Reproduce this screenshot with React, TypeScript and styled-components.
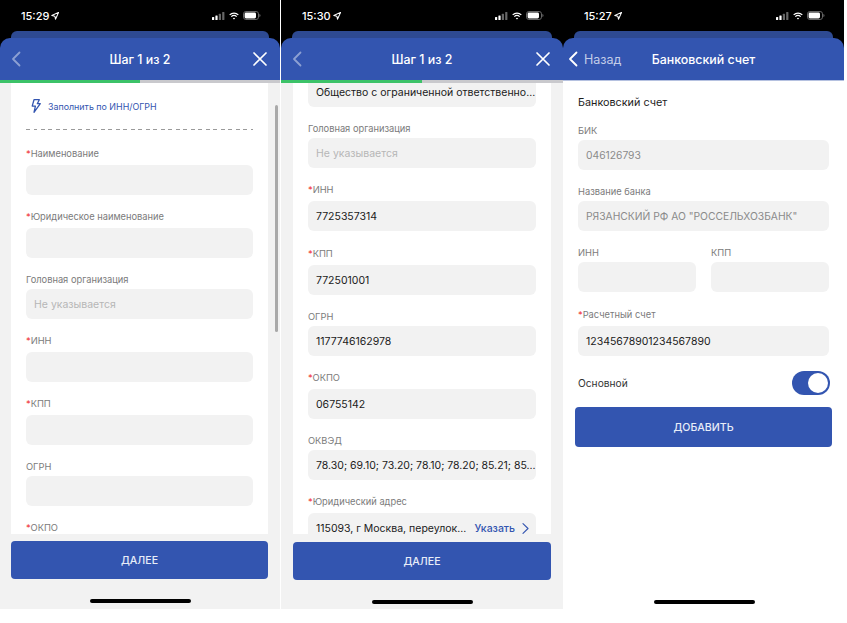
import React from 'react';
import styled, { createGlobalStyle } from 'styled-components';

const GlobalStyle = createGlobalStyle`
  html, body { margin: 0; padding: 0; background: #fff; }
  body { font-family: Inter, "Noto Sans", "Liberation Sans", sans-serif; }
`;

const Page = styled.div`
  display: flex;
  width: 847px;
  height: 623px;
  overflow: hidden;
  background: #fff;
`;
const Phone = styled.div<{ $width: number; $gapRight?: boolean; $light?: boolean }>`
  width: ${props => props.$width}px;
  margin-right: ${props => (props.$gapRight ? 1 : 0)}px;
  height: 609px;
  flex: none;
  display: flex;
  flex-direction: column;
  position: relative;
  background: ${props => (props.$light ? '#fff' : '#f2f2f2')};
`;
const StatusBar = styled.div`
  height: 31px;
  background: #000;
  color: #fff;
  display: flex;
  align-items: center;
  justify-content: space-between;
  padding: 0 19px 0 21px;
  box-sizing: border-box;
  font-size: 11px;
  font-weight: 500;
`;
const Time = styled.div`
  display: flex;
  align-items: center;
  gap: 2px;
`;
const StatusIcons = styled.div`
  display: flex;
  align-items: center;
  gap: 4px;
`;
const SheetEdge = styled.div`
  height: 7px;
  background: #000;
  padding: 0 11px;
  &::before {
    content: '';
    display: block;
    height: 7px;
    background: #2e4a92;
    border-radius: 6px 6px 0 0;
  }
`;
const HeaderWrap = styled.div`
  background: #000;
`;
const Header = styled.header`
  height: 42px;
  background: #3355b0;
  border-radius: 10px 10px 0 0;
  color: #fff;
  display: flex;
  align-items: center;
  justify-content: center;
  position: relative;
  font-size: 12.4px;
  font-weight: 500;
`;
const BackLink = styled.div`
  position: absolute;
  left: 5px;
  top: 13px;
  display: flex;
  align-items: center;
  gap: 6px;
  font-size: 12.5px;
  font-weight: 400;
  color: #c3cde8;
`;
const HeaderIcon = styled.div<{ $side: 'left' | 'right' }>`
  position: absolute;
  top: 13px;
  ${props => (props.$side === 'left' ? 'left: 11px;' : 'right: 12px;')}
  display: flex;
`;
const Progress = styled.div`
  height: 3px;
  background: #c9c9cd;
`;
const ProgressFill = styled.div`
  width: 50%;
  height: 100%;
  background: #3cc268;
`;
const Body = styled.div<{ $left: number }>`
  flex: 1;
  display: flex;
  flex-direction: column;
  min-height: 0;
  padding: 0 12px 0 ${props => props.$left}px;
`;
const Card = styled.div`
  height: 451px;
  background: #fff;
  overflow: hidden;
  padding: 0 15px;
  box-sizing: border-box;
  display: flex;
  flex-direction: column;
`;
const FillRow = styled.div`
  height: 46px;
  flex: none;
  display: flex;
  align-items: center;
  gap: 7px;
  padding: 0 5px;
  color: #3355b0;
  font-size: 8.9px;
`;
const Divider = styled.div`
  height: 1px;
  flex: none;
  margin-bottom: 17px;
  background: repeating-linear-gradient(90deg, #9a9a9a 0 4px, transparent 4px 7.5px);
`;
const Field = styled.div<{ $grow?: boolean; $extra?: number }>`
  flex: ${props => (props.$grow ? 1 : 'none')};
  min-width: 0;
  margin-bottom: ${props => 15 + (props.$extra ?? 0)}px;
`;
const Label = styled.div<{ $required?: boolean }>`
  font-size: 9.3px;
  line-height: 14px;
  color: #7b7b7b;
  margin-bottom: ${props => (props.$required ? 4 : 2)}px;
`;
const Star = styled.span`
  color: #f03a3a;
`;
const Input = styled.div<{ $clipped?: boolean; $muted?: boolean; $placeholder?: boolean }>`
  height: ${props => (props.$clipped ? 24 : 30)}px;
  padding: 0 8px ${props => (props.$clipped ? 6 : 0)}px;
  box-sizing: border-box;
  background: #f2f2f2;
  border-radius: ${props => (props.$clipped ? '0 0 6px 6px' : '6px')};
  display: flex;
  align-items: center;
  gap: 8px;
  font-size: ${props => (props.$muted ? 10.3 : 10.5)}px;
  color: ${props => (props.$placeholder ? '#b6b6b6' : props.$muted ? '#8a8a8a' : '#1a1a1a')};
`;
const InputText = styled.span`
  flex: 1;
  min-width: 0;
  white-space: nowrap;
`;
const Action = styled.span`
  color: #3355b0;
  font-weight: 500;
  display: flex;
  align-items: center;
  gap: 7px;
  margin-right: -1px;
`;
const Scrollbar = styled.div`
  position: absolute;
  left: 275px;
  top: 105px;
  width: 2.5px;
  height: 227px;
  border-radius: 2px;
  background: #a9a9a9;
`;
const PrimaryButton = styled.div<{ $top?: number }>`
  height: 38px;
  flex: none;
  margin-top: ${props => props.$top ?? 7}px;
  background: #3355b0;
  border-radius: 4px;
  color: #e8edf8;
  font-size: 10.6px;
  font-weight: 500;
  display: flex;
  align-items: center;
  justify-content: center;
`;
const HomeBar = styled.div<{ $bottom: number }>`
  position: absolute;
  bottom: ${props => props.$bottom}px;
  left: 50%;
  width: 101px;
  height: 4px;
  margin-left: -50px;
  border-radius: 2px;
  background: #000;
`;
const AccountBody = styled.div`
  flex: 1;
  padding: 0 15px;
  border-top: 1px solid #b5c1e0;
`;
const AccountTitle = styled.div`
  height: 43px;
  display: flex;
  align-items: center;
  font-size: 10.8px;
  color: #1d1d1d;
  box-sizing: border-box;
`;
const TwoColumns = styled.div`
  display: flex;
  gap: 15px;
  margin: 2px 0 1px;
`;
const SwitchRow = styled.div`
  height: 30px;
  margin-top: -3px;
  display: flex;
  align-items: center;
  justify-content: space-between;
  font-size: 10.2px;
  color: #333;
`;
const Switch = styled.div`
  width: 38px;
  height: 24px;
  margin-right: -1px;
  box-sizing: border-box;
  padding: 2px;
  border-radius: 12px;
  background: #3355b0;
  display: flex;
  justify-content: flex-end;
`;
const Knob = styled.div`
  width: 20px;
  height: 20px;
  border-radius: 50%;
  background: #fff;
`;
const AddButton = styled(PrimaryButton)`
  height: 40px;
  margin: 9px -3px 0;
`;

const Location = () => (
  <svg width="8" height="8" viewBox="0 0 10 10">
    <path d="M9.5.5 1 4.4l3.8.8.8 3.8z" fill="none" stroke="#fff" strokeWidth="1.3" strokeLinejoin="round" />
  </svg>
);

const Signal = () => (
  <svg width="13" height="8" viewBox="0 0 13 8">
    <rect x="0" y="5" width="2.2" height="3" rx=".5" fill="#fff" />
    <rect x="3.400" y="3.500" width="2.2" height="4.500" rx=".5" fill="#fff" />
    <rect x="6.800" y="1.700" width="2.2" height="6.300" rx=".5" fill="#666" />
    <rect x="10.200" y="0" width="2.2" height="8" rx=".5" fill="#666" />
  </svg>
);

const Wifi = () => (
  <svg width="10" height="8" viewBox="0 0 12 9" fill="none" stroke="#fff" strokeWidth="1.5">
    <path d="M.8 3.100a7.600 7.600 0 0 1 10.400 0" />
    <path d="M2.800 5.200a4.700 4.700 0 0 1 6.400 0" />
    <path d="M6 8.800 4.600 7.200a2 2 0 0 1 2.800 0z" fill="#fff" stroke="none" />
  </svg>
);

const Battery = () => (
  <svg width="18" height="9" viewBox="0 0 18 9">
    <rect x=".5" y=".5" width="15" height="8" rx="2.4" fill="none" stroke="#666" />
    <rect x="1.600" y="1.600" width="11.400" height="5.800" rx="1.400" fill="#fff" />
    <path d="M16.400 3v3c.7-.2 1.100-.8 1.100-1.500S17.100 3.200 16.400 3z" fill="#666" />
  </svg>
);

const Status = ({ time }: { time: string }) => (
  <StatusBar>
    <Time>
      {time}
      <Location />
    </Time>
    <StatusIcons>
      <Signal />
      <Wifi />
      <Battery />
    </StatusIcons>
  </StatusBar>
);

const Chevron = ({ color }: { color: string }) => (
  <svg width="10" height="16" viewBox="0 0 10 16" fill="none" stroke={color} strokeWidth="1.8" strokeLinecap="round" strokeLinejoin="round">
    <path d="M8.500 1.500 2 8l6.500 6.500" />
  </svg>
);

const Close = () => (
  <svg width="16" height="16" viewBox="0 0 16 16" fill="none" stroke="#fff" strokeWidth="1.7" strokeLinecap="round">
    <path d="M2 2l12 12M14 2 2 14" />
  </svg>
);

const Bolt = () => (
  <svg width="10" height="14" viewBox="0 0 10 14" fill="none" stroke="#3355b0" strokeWidth="1.3" strokeLinejoin="round">
    <path d="M3 .7h5.300L6.300 4.700h3L3 13.300l1.400-6.200H1.200z" />
  </svg>
);

const SmallChevron = () => (
  <svg width="7" height="11" viewBox="0 0 7 11" fill="none" stroke="#3355b0" strokeWidth="1.1" strokeLinecap="round" strokeLinejoin="round">
    <path d="M1 .7 6 5.500 1 10.300" />
  </svg>
);

type FieldProps = {
  label: string;
  required?: boolean;
  value?: string;
  placeholder?: boolean;
  muted?: boolean;
  grow?: boolean;
  action?: boolean;
  extra?: number;
};

const FormField = ({ label, required, value, placeholder, muted, grow, action, extra }: FieldProps) => (
  <Field $grow={grow} $extra={extra}>
    <Label $required={required}>
      {required && <Star>*</Star>}
      {label}
    </Label>
    <Input $placeholder={placeholder} $muted={muted}>
      <InputText>{value}</InputText>
      {action && (
        <Action>
          Указать
          <SmallChevron />
        </Action>
      )}
    </Input>
  </Field>
);

const StepHeader = () => (
  <>
    <SheetEdge />
    <HeaderWrap>
      <Header>
        <HeaderIcon $side="left">
          <Chevron color="#8da0d3" />
        </HeaderIcon>
        Шаг 1 из 2
        <HeaderIcon $side="right">
          <Close />
        </HeaderIcon>
      </Header>
    </HeaderWrap>
    <Progress>
      <ProgressFill />
    </Progress>
  </>
);

const App = () => (
  <Page>
    <GlobalStyle />
    <Phone $width={280} $gapRight>
      <Status time="15:29" />
      <StepHeader />
      <Body $left={11}>
        <Card>
          <FillRow>
            <Bolt />
            Заполнить по ИНН/ОГРН
          </FillRow>
          <Divider />
          <FormField required label="Наименование" />
          <FormField required label="Юридическое наименование" />
          <FormField label="Головная организация" value="Не указывается" placeholder />
          <FormField required label="ИНН" />
          <FormField required label="КПП" />
          <FormField label="ОГРН" />
          <FormField required label="ОКПО" />
        </Card>
        <PrimaryButton>ДАЛЕЕ</PrimaryButton>
      </Body>
      <Scrollbar />
      <HomeBar $bottom={6} />
    </Phone>
    <Phone $width={282}>
      <Status time="15:30" />
      <StepHeader />
      <Body $left={12}>
        <Card>
          <Field>
            <Input $clipped>
              <InputText>Общество с ограниченной ответственно...</InputText>
            </Input>
          </Field>
          <FormField label="Головная организация" value="Не указывается" placeholder />
          <FormField required label="ИНН" value="7725357314" extra={1} />
          <FormField required label="КПП" value="772501001" />
          <FormField label="ОГРН" value="1177746162978" />
          <FormField required label="ОКПО" value="06755142" />
          <FormField label="ОКВЭД" value="78.30; 69.10; 73.20; 78.10; 78.20; 85.21; 85..." />
          <FormField required label="Юридический адрес" value="115093, г Москва, переулок..." action />
        </Card>
        <PrimaryButton $top={8}>ДАЛЕЕ</PrimaryButton>
      </Body>
      <HomeBar $bottom={5} />
    </Phone>
    <Phone $width={281} $light>
      <Status time="15:27" />
      <SheetEdge />
      <HeaderWrap>
        <Header>
          <BackLink>
            <Chevron color="#fff" />
            Назад
          </BackLink>
          Банковский счет
        </Header>
      </HeaderWrap>
      <AccountBody>
        <AccountTitle>Банковский счет</AccountTitle>
        <FormField label="БИК" value="046126793" muted />
        <FormField label="Название банка" value={'РЯЗАНСКИЙ РФ АО "РОССЕЛЬХОЗБАНК"'} muted />
        <TwoColumns>
          <FormField grow label="ИНН" />
          <FormField grow label="КПП" />
        </TwoColumns>
        <FormField required label="Расчетный счет" value="12345678901234567890" />
        <SwitchRow>
          Основной
          <Switch>
            <Knob />
          </Switch>
        </SwitchRow>
        <AddButton>ДОБАВИТЬ</AddButton>
      </AccountBody>
      <HomeBar $bottom={5} />
    </Phone>
  </Page>
);

export default App;
